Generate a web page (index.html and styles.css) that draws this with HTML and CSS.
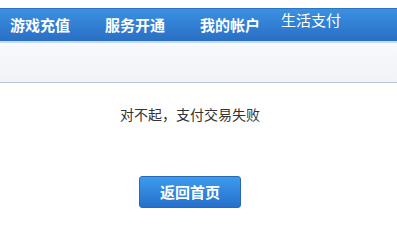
FILE: index.html
```html
<!DOCTYPE html>
<html lang="zh-CN">
<head>
<meta charset="utf-8">
<title>支付失败</title>
<link rel="stylesheet" href="styles.css">
</head>
<body>
<div class="top-gap"></div>
<nav class="nav">
  <a class="nav-item">游戏充值</a>
  <a class="nav-item">服务开通</a>
  <a class="nav-item">我的帐户</a>
  <a class="nav-item nav-item-alt">生活支付</a>
</nav>
<div class="nav-line"></div>
<div class="subbar"></div>
<main class="content">
  <p class="message">对不起，支付交易失败</p>
  <a class="btn">返回首页</a>
</main>
</body>
</html>
```
FILE: styles.css
```css
html, body {
  margin: 0;
  padding: 0;
  background: #fff;
  font-family: "Noto Sans CJK SC", "Noto Sans", sans-serif;
}
.top-gap {
  height: 8px;
  background: #fff;
}
.nav {
  height: 32px;
  border-top: 1px solid #2f74c4;
  background: linear-gradient(#3b90e2, #2a6fc4);
  display: flex;
  align-items: center;
  padding-left: 10px;
  box-sizing: content-box;
}
.nav-item {
  color: #fff;
  font-size: 15px;
  font-weight: bold;
  line-height: 20px;
  margin-right: 35px;
  letter-spacing: 0;
  white-space: nowrap;
}
.nav-item-alt {
  font-weight: normal;
  margin-left: -14px;
  align-self: flex-start;
  margin-top: 1px;
}
.nav-line {
  height: 2px;
  background: #c7dcf1;
}
.subbar {
  height: 39px;
  background: linear-gradient(#f8f9fc, #f1f3f8);
  border-bottom: 1px solid #bcc5d2;
}
.content {
  width: 380px;
  display: flex;
  flex-direction: column;
  align-items: center;
}
.message {
  margin: 21px 0 0;
  font-size: 14px;
  line-height: 20px;
  color: #333;
}
.btn {
  margin-top: 52px;
  width: 100px;
  height: 30px;
  border: 1px solid #2b68b4;
  border-radius: 3px;
  background: linear-gradient(#3d9bec, #2570cc);
  color: #fff;
  font-size: 15px;
  font-weight: bold;
  line-height: 30px;
  text-align: center;
}
```
